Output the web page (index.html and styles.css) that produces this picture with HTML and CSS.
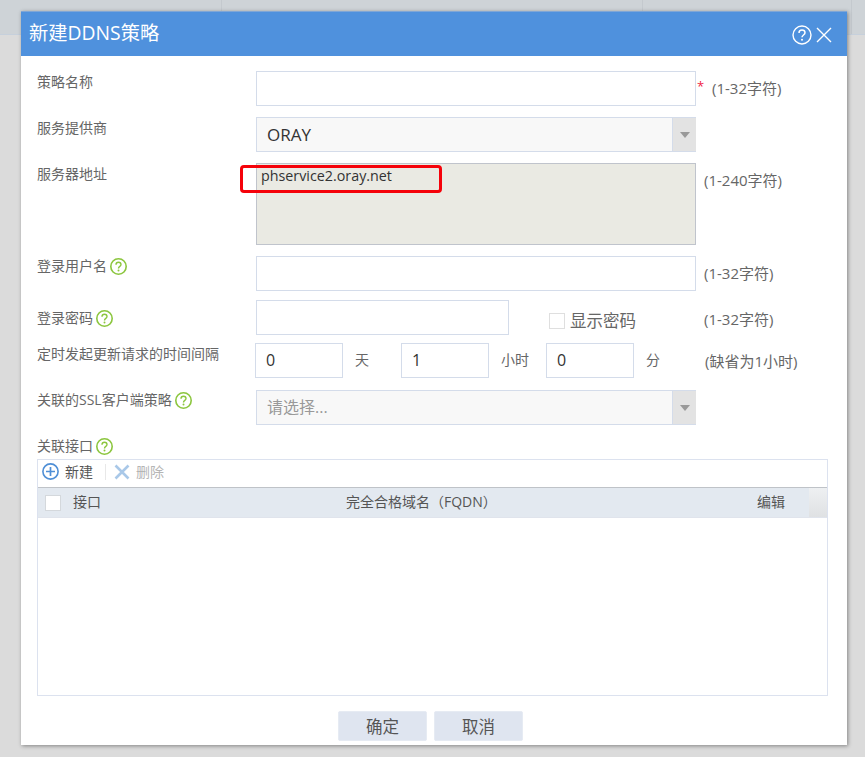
FILE: index.html
```html
<!DOCTYPE html>
<html lang="zh-CN">
<head>
<meta charset="utf-8">
<title>新建DDNS策略</title>
<link rel="stylesheet" href="styles.css">
</head>
<body>
<div class="topbar">
  <div class="tb tb-a"></div>
  <div class="tb tb-b"></div>
  <div class="tb tb-c"></div>
  <div class="tb tb-d"></div>
</div>
<section class="dialog">
  <header class="dialog-head">
    <h1 class="dialog-title">新建DDNS策略</h1>
    <div class="head-icons">
      <svg class="ico-help" viewBox="0 0 20 20" width="20" height="20"><circle cx="10" cy="10" r="9" fill="none" stroke="#fff" stroke-width="1.4"/><path d="M7 8c0-2 1.300-3 3-3s3 1 3 2.700c0 2.300-3 2.300-3 4.600" fill="none" stroke="#fff" stroke-width="1.500"/><circle cx="10" cy="14.800" r="1" fill="#fff"/></svg>
      <svg class="ico-close" viewBox="0 0 16 16" width="16" height="16"><path d="M1 1l14 14M15 1L1 15" stroke="#fff" stroke-width="1.400" fill="none"/></svg>
    </div>
  </header>
  <div class="dialog-body">
    <div class="row r-name">
      <label class="lbl">策略名称</label>
      <div class="input wide"></div>
      <span class="star">*</span>
      <span class="hint hint-star">(1-32字符)</span>
    </div>
    <div class="row r-provider">
      <label class="lbl">服务提供商</label>
      <div class="select"><span class="select-val">ORAY</span><span class="select-btn"><i class="caret"></i></span></div>
    </div>
    <div class="row r-server">
      <label class="lbl">服务器地址</label>
      <div class="textarea">phservice2.oray.net<span class="highlight"></span></div>
      <span class="hint">(1-240字符)</span>
    </div>
    <div class="row r-user">
      <label class="lbl">登录用户名<svg class="q" viewBox="0 0 17 17" width="17" height="17"><use href="#q"/></svg></label>
      <div class="input wide"></div>
      <span class="hint">(1-32字符)</span>
    </div>
    <div class="row r-pass">
      <label class="lbl">登录密码<svg class="q" viewBox="0 0 17 17" width="17" height="17"><use href="#q"/></svg></label>
      <div class="input short"></div>
      <div class="show-pass"><span class="check"></span><span>显示密码</span></div>
      <span class="hint">(1-32字符)</span>
    </div>
    <div class="row r-time">
      <label class="lbl lbl-time">定时发起更新请求的时间间隔</label>
      <div class="time-fields">
        <div class="input num">0</div><span class="unit">天</span>
        <div class="input num">1</div><span class="unit">小时</span>
        <div class="input num">0</div><span class="unit">分</span>
      </div>
      <span class="hint hint-time">(缺省为1小时)</span>
    </div>
    <div class="row r-ssl">
      <label class="lbl">关联的SSL客户端策略<svg class="q" viewBox="0 0 17 17" width="17" height="17"><use href="#q"/></svg></label>
      <div class="select"><span class="select-val placeholder">请选择...</span><span class="select-btn"><i class="caret"></i></span></div>
    </div>
    <div class="iface-label">关联接口<svg class="q" viewBox="0 0 17 17" width="17" height="17"><use href="#q"/></svg></div>
    <div class="grid">
      <div class="toolbar">
        <span class="tool"><svg viewBox="0 0 17 17" width="17" height="17"><circle cx="8.500" cy="8.500" r="7.600" fill="none" stroke="#4f8fd6" stroke-width="1.600"/><path d="M8.500 4v9M4 8.500h9" stroke="#4f8fd6" stroke-width="1.700"/></svg>新建</span>
        <span class="sep"></span>
        <span class="tool tool-off"><svg viewBox="0 0 16 16" width="16" height="16"><path d="M1.500 1.500l13 13M14.500 1.500l-13 13" stroke="#a9c8e8" stroke-width="2.600"/></svg>删除</span>
      </div>
      <div class="grid-head">
        <span class="th-check"><span class="check check-head"></span></span>
        <span class="th th-if">接口</span>
        <span class="th th-fqdn">完全合格域名（FQDN）</span>
        <span class="th th-edit">编辑</span>
        <span class="th-scroll"></span>
      </div>
      <div class="grid-body"></div>
    </div>
    <div class="actions">
      <button class="btn" type="button">确定</button>
      <button class="btn" type="button">取消</button>
    </div>
  </div>
</section>
<svg class="defs" width="0" height="0"><defs><g id="q"><circle cx="8.500" cy="8.500" r="7.700" fill="none" stroke="#8cc63f" stroke-width="1.600"/><path d="M6 6.700c0-1.700 1.100-2.500 2.500-2.500S11 5 11 6.500c0 1.900-2.500 1.900-2.500 3.900" fill="none" stroke="#8cc63f" stroke-width="1.400"/><circle cx="8.500" cy="12.500" r="1" fill="#8cc63f"/></g></defs></svg>
</body>
</html>
```
FILE: styles.css
```css
* { box-sizing: border-box; }
html, body { margin: 0; height: 100%; }
body {
  width: 865px;
  height: 757px;
  overflow: hidden;
  position: relative;
  background: #dbdbdb;
  font-family: "Open Sans", "Noto Sans CJK SC", sans-serif;
  font-size: 14px;
  color: #555;
}
.defs { position: absolute; }
.topbar { display: flex; height: 35px; background: #ced3d7; border-bottom: 1px solid #c6d0dc; }
.tb { height: 100%; border-right: 1px solid #c4c9ce; }
.tb-a { width: 222px; }
.tb-b { width: 421px; }
.tb-c { width: 209px; }
.tb-d { flex: 1; border-right: 0; }

.dialog {
  position: absolute;
  left: 21px;
  top: 11px;
  width: 826px;
  height: 734px;
  background: #fff;
  box-shadow: 1px 1px 4px rgba(0,0,0,.4);
  display: flex;
  flex-direction: column;
}
.dialog-head {
  height: 45px;
  flex: none;
  background: #4f91dd;
  border-top: 1px solid #7fa6d6;
  display: flex;
  align-items: center;
  justify-content: space-between;
  padding: 0 15px 0 8px;
}
.dialog-title { margin: 0 0 2px; font-size: 19.3px; font-weight: 400; color: #fff; line-height: 1; }
.head-icons { display: flex; align-items: center; gap: 4px; margin-top: 2px; }
.ico-help, .ico-close { display: block; }

.dialog-body { flex: 1; padding: 15px 18px 0 16px; display: flex; flex-direction: column; }
.row { display: flex; align-items: flex-start; flex: none; }
.lbl { width: 219px; flex: none; display: flex; align-items: center; line-height: 20px; color: #666; }
.q { margin-left: 3px; flex: none; }
.input {
  height: 35px;
  background: #fff;
  border: 1px solid #d4dcea;
  line-height: 33px;
  color: #333;
  font-size: 16px;
}
.wide { width: 440px; flex: none; }
.short { width: 253px; flex: none; }
.hint { margin-left: 8px; color: #666; font-size: 15px; line-height: 20px; margin-top: 7px; white-space: nowrap; }
.star { color: #f01f45; width: 10px; margin-left: 1px; line-height: 20px; margin-top: 5px; font-size: 13px; }
.hint-star { margin-left: 5px; }
.r-provider { margin-top: 11px; }
.r-server { margin-top: 11px; height: 82px; }
.r-user { margin-top: 11px; }
.r-pass { margin-top: 9px; }
.r-time { margin-top: 8px; }
.r-ssl { margin-top: 12px; }
.r-name .lbl { margin-top: 1px; }
.r-provider .lbl, .r-server .lbl { margin-top: 1px; }
.r-user .lbl { margin-top: 0; }
.r-pass .lbl { margin-top: 8px; }
.r-time .lbl { margin-top: 1px; }
.r-ssl .lbl { margin-top: 0; }

.select {
  width: 440px;
  height: 35px;
  flex: none;
  display: flex;
  background: #f8f8f8;
  border: 1px solid #d4dcea;
  border-right: 0;
}
.select-val { flex: 1; padding-left: 10px; line-height: 33px; font-size: 17px; color: #333; }
.select-val.placeholder { color: #999; font-size: 16px; }
.select-btn { width: 24px; background: #e3e3e3; border-left: 1px solid #d4dcea; display: flex; align-items: center; justify-content: center; }
.caret { width: 0; height: 0; border-left: 5px solid transparent; border-right: 5px solid transparent; border-top: 6px solid #999; }

.textarea {
  position: relative;
  width: 440px;
  height: 82px;
  flex: none;
  background: #eaeae3;
  border: 1px solid #c0c4cc;
  padding: 2px 4px;
  font-size: 14.3px;
  line-height: 20px;
  color: #333;
}
.highlight {
  position: absolute;
  left: -17px;
  top: 1px;
  width: 202px;
  height: 28px;
  border: 3px solid #f5020a;
  border-radius: 4px;
  pointer-events: none;
}
.show-pass { width: 155px; padding-left: 40px; flex: none; display: flex; align-items: center; gap: 5px; margin-top: 11px; font-size: 16.5px; color: #666; line-height: 20px; }
.check { width: 16px; height: 16px; border: 1px solid #dfdfdf; background: #fff; flex: none; display: block; }
.r-pass .hint { margin-left: 40px; margin-top: 9px; }

.time-fields { display: flex; align-items: center; margin-left: -1px; width: 447px; flex: none; }
.num { width: 88px; padding-left: 10px; flex: none; }
.unit { width: 57px; padding: 0 0 4px 12px; flex: none; color: #666; }
.time-fields .unit:nth-child(2) { width: 58px; }
.time-fields .unit:last-child { width: 28px; }
.r-time .hint-time { margin-left: 3px; margin-top: 8px; }

.iface-label { margin-top: 9px; padding-bottom: 1px; line-height: 20px; display: flex; align-items: center; color: #666; height: 25px; flex: none; }
.grid {
  width: 791px;
  height: 237px;
  flex: none;
  border: 1px solid #dce2ef;
  display: flex;
  flex-direction: column;
}
.toolbar { height: 27px; flex: none; display: flex; align-items: center; padding: 0 0 4px 4px; }
.tool { display: flex; align-items: center; gap: 6px; color: #555; line-height: 20px; }
.tool-off { color: #b5b5b5; }
.sep { width: 1px; height: 16px; background: #e8e8e8; margin: 0 8px 0 12px; }
.grid-head {
  height: 31px;
  flex: none;
  background: #e3e9f0;
  border-top: 1px solid #bfc3c8;
  border-bottom: 1px solid #e0e4ec;
  display: flex;
  align-items: center;
  color: #555;
}
.th-check { width: 35px; flex: none; padding-left: 7px; }
.check-head { border-color: #d4d8dc; }
.th { flex: none; padding-bottom: 4px; }
.th-if { width: 273px; }
.th-fqdn { width: 411px; }
.th-edit { width: 52px; }
.th-scroll { flex: 1; align-self: stretch; background: linear-gradient(#eef0f2, #dfe1e3); }
.grid-body { flex: 1; background: #fff; }
.actions { display: flex; justify-content: flex-start; gap: 7px; margin-top: 15px; padding-left: 301px; }
.btn {
  width: 89px;
  height: 30px;
  border: 1px solid #e6ebf3;
  border-radius: 2px;
  background: #dfe5f0;
  font: inherit;
  font-size: 16.5px;
  color: #555;
  padding: 0;
}
```
